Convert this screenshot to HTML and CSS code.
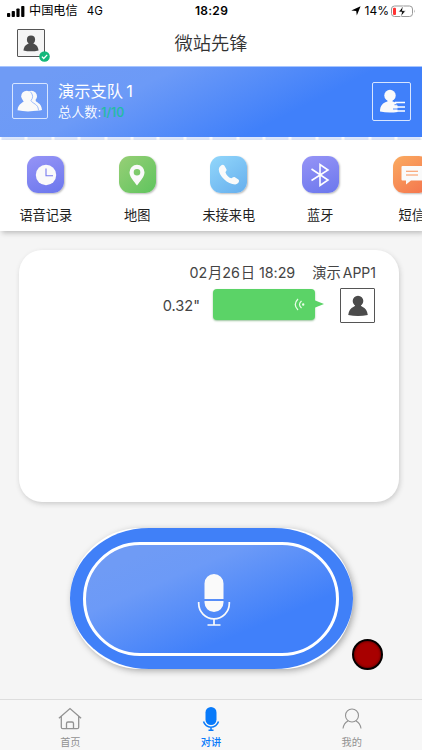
FILE: index.html
```html
<!DOCTYPE html>
<html lang="zh-CN">
<head>
<meta charset="utf-8">
<title>微站先锋</title>
<link rel="stylesheet" href="styles.css">
</head>
<body>
<svg class="defs" width="0" height="0">
  <symbol id="person" viewBox="0 0 20 22"><circle cx="10" cy="6" r="5.300"/><path d="M7.200 10h5.600q0 1.200 1.500 1.700 4.700 1.800 5.500 8.300-9.800 2.200-19.600 0 .8-6.500 5.500-8.300 1.500-.5 1.500-1.700z"/></symbol>
</svg>
<header class="top">
  <div class="status">
    <div class="carrier">
      <svg class="signal" width="18" height="11" viewBox="0 0 18 11"><rect x="0" y="7" width="3.200" height="4" rx=".8"/><rect x="4.700" y="5" width="3.200" height="6" rx=".8"/><rect x="9.400" y="2.500" width="3.200" height="8.500" rx=".8"/><rect x="14.200" y="0" width="3.200" height="11" rx=".8"/></svg>
      <span class="name">中国电信</span><span class="net">4G</span>
    </div>
    <div class="clock">18:29</div>
    <div class="battery">
      <svg width="10" height="10" viewBox="0 0 10 10"><path d="M9.600.300 5.800 9.600 5.200 5 .300 4.400z"/></svg>
      <span class="percent">14%</span>
      <svg width="25" height="13" viewBox="0 0 25 13"><rect x=".500" y="1" width="21" height="10.500" rx="3" fill="#fff" stroke="#999"/><path d="M23.300 4.500v3.500q1.400-1.700 0-3.500z" fill="#999"/><rect x="2" y="2.700" width="3" height="7.200" rx="1" fill="#f33"/><path d="M12.300.800 7.600 7h3.200l-1.200 5 5-6.300h-3.300z" stroke="#fff" stroke-width=".7"/></svg>
    </div>
  </div>
  <div class="nav">
    <div class="avatar"><svg width="16" height="17"><use href="#person"/></svg>
      <svg class="check" width="11" height="11" viewBox="0 0 11 11"><circle cx="5.500" cy="5.500" r="5.300" fill="#14b87b"/><path d="m2.900 5.600 1.800 1.900 3.500-3.600" fill="none" stroke="#fff" stroke-width="1.300"/></svg>
    </div>
    <h1>微站先锋</h1>
  </div>
</header>
<section class="group">
  <div class="frame members"><svg width="26" height="22" viewBox="0 0 26 22"><circle cx="14.500" cy="6.300" r="5.500"/><path d="M14 10h4.500c0 3 6 2 6.500 10q-4 1-9 0z"/><path d="M7.300 9.500h6.200c0 4 7.500 3 8 10.800q-10.500 2.300-21 0C1 12.500 7.300 13.500 7.300 9.500z"/><circle cx="9.800" cy="6.300" r="5.600"/><path d="M13.500 1.800q4 4.500.5 8.700c1.500 3.500 7.200 3 7.500 9.700" fill="none" stroke="#79a3fa" stroke-width=".7"/></svg></div>
  <div class="info">
    <div class="title">演示支队<span>1</span></div>
    <div class="count">总人数:<b>1/10</b></div>
  </div>
  <div class="frame list"><svg width="26" height="24" viewBox="0 0 26 24"><circle cx="11" cy="6.500" r="5.700"/><path d="M8.500 10h5v2.500c3 .6 4 2 5 4V23q-9 1.300-17.500-.5c0-6 3-9 7.500-10z"/><path d="M16 13.500h10M18 18h8M16 22h10" stroke="#fff" stroke-width="1.700"/><path d="M15.500 15.700h6M14 20h6" stroke="#4080f8" stroke-width=".9"/></svg></div>
</section>
<div class="dashes"></div>
<nav class="tools">
  <a class="tool"><span class="tile violet"><svg width="22" height="22" viewBox="0 0 22 22"><circle cx="11" cy="11" r="10.200"/><path d="M11 4.500v7.300h7" fill="none" stroke="#777aef" stroke-width="1.100"/></svg></span>语音记录</a>
  <a class="tool"><span class="tile green"><svg width="16" height="22" viewBox="0 0 16 22"><path fill-rule="evenodd" d="M8 .800a7.500 7.500 0 0 0-7.500 7.500C.500 13 5 17.500 8 21.500c3-4 7.500-8.500 7.500-13.200A7.500 7.500 0 0 0 8 .800zm0 4.200a3.300 3.300 0 1 1 0 6.600A3.300 3.300 0 0 1 8 5z"/></svg></span>地图</a>
  <a class="tool"><span class="tile sky"><svg width="22" height="22" viewBox="0 0 22 22"><path d="M1.800 2.800Q4.300-.500 6.300 1.500l2 3.600c.9 1.700-.8 2.200-.8 3.300 1 2.700 3 5 5.700 5.900 1.300-.1 2-1.900 3.700-1l3.500 2.300c1.800 1.600-.6 4.400-3.200 4.900C9.500 20.500.500 11.500.800 5.200c.1-1 .5-1.700 1-2.400z"/></svg></span>未接来电</a>
  <a class="tool"><span class="tile violet"><svg width="20" height="24" viewBox="0 0 20 24"><path d="m1.500 6 16.500 11-8 5.500v-21L18 7 1.500 17.500" fill="none" stroke="#fff" stroke-width="1.600"/></svg></span>蓝牙</a>
  <a class="tool"><span class="tile orange"><svg width="22" height="20" viewBox="0 0 22 20"><path d="M1.500 1h19q1 0 1 1v12.500q0 1-1 1H10l-5 4v-4H1.500q-1 0-1-1V2q0-1 1-1z"/><path d="M5 6.300h12M5 10h12" stroke="#f99157" stroke-width="1.100"/></svg></span>短信</a>
</nav>
<main>
  <section class="messages">
    <div class="meta"><time>02<i>月</i>26<i>日</i> 18:29</time><span>演示<b>APP1</b></span></div>
    <div class="message">
      <span class="length">0.32"</span>
      <div class="bubble"><svg width="11" height="13" viewBox="0 0 11 13" fill="none" stroke="#eaffe9" stroke-width="1.200"><path d="M4 1q-5.500 5.500 0 11M7.500 3q-4 3.500 0 7"/><circle cx="9.200" cy="6.500" r=".6"/></svg></div>
      <div class="sender"><svg width="20" height="22"><use href="#person"/></svg></div>
    </div>
  </section>
  <div class="talk">
    <div class="ring"><div class="pad">
      <svg width="34" height="54" viewBox="0 0 34 54"><path d="M7.500 10.500a9.500 9.500 0 0 1 19 0V26h-19zM7.500 28h19v1.500a9.500 9.500 0 0 1-19 0z"/><path d="M1.700 29v1.500a15.300 15.300 0 0 0 30.600 0V29M17 45.500V52M10.500 52h13" fill="none" stroke="#fafafa" stroke-width="1.700"/></svg>
    </div></div>
    <span class="record"></span>
  </div>
</main>
<footer class="tabs">
  <a><svg width="24" height="24" viewBox="0 0 24 24" fill="none" stroke="#929292" stroke-width="1.300"><path d="M.900 11.200 12 1.500l11.100 9.700M3.300 9.500v10.700q0 1.500 1.500 1.500h14.400q1.500 0 1.500-1.500V9.500M8.500 21.500v-5q0-1.500 1.500-1.500h4q1.500 0 1.500 1.500v5"/></svg>首页</a>
  <a class="active"><svg width="18" height="26" viewBox="0 0 18 26"><rect x="3.500" y="1" width="11" height="18" rx="5.500"/><path d="M1.500 15.500C4 23 14 23 16.500 15.500M9 21v3M6.500 24.300h5" fill="none" stroke="#087afa" stroke-width="1.500"/></svg>对讲</a>
  <a><svg width="20" height="24" viewBox="0 0 20 24" fill="none" stroke="#929292" stroke-width="1.100"><circle cx="10" cy="8.500" r="6.500"/><path d="M1 21.500q.800-5.500 5-7.500M19 21.500q-.800-5.500-5-7.500"/></svg>我的</a>
</footer>
</body>
</html>
```
FILE: styles.css
```css
* { box-sizing: border-box; }
body {
  margin: 0;
  width: 422px;
  height: 750px;
  overflow: hidden;
  display: flex;
  flex-direction: column;
  background: #f5f5f5;
  color: #333;
  font-family: Inter, "Noto Sans CJK SC", sans-serif;
}
svg { display: block; flex: none; }
i { font-style: normal; }
.defs { position: absolute; }
.top { height: 66px; background: #fff; flex: none; }
.status {
  height: 22px;
  padding: 0 6px 0 7px;
  display: grid;
  grid-template-columns: 1fr auto 1fr;
  align-items: center;
  color: #000;
  font-size: 11.5px;
  line-height: 22px;
}
.carrier, .battery { display: flex; align-items: center; }
.name { margin-left: 4px; font-size: 12.2px; }
.net { margin-left: 9px; }
.clock { font-weight: 600; font-size: 12px; letter-spacing: .3px; }
.battery { justify-content: flex-end; }
.percent { margin: 0 2px 0 4px; font-size: 12px; }
.nav { height: 44px; display: grid; grid-template-columns: 1fr auto 1fr; }
.avatar {
  position: relative;
  width: 28px;
  height: 28px;
  margin: 7px 0 0 17px;
  display: grid;
  place-items: center;
  border: 1px solid #555;
  border-radius: 1px;
  background: #f5f5f5;
  fill: #4b4b4b;
}
.check { position: absolute; right: -6px; bottom: -6px; }
h1 { margin: 0; font-size: 18.3px; line-height: 42px; font-weight: 350; color: #333; }
.group {
  height: 71px;
  flex: none;
  display: flex;
  align-items: center;
  padding: 0 11px 2px 12px;
  border-top: 1px solid #a7c5ff;
  background: linear-gradient(153deg, #6f9bf5 10%, #6c9af7 32%, #4080fa 68%);
  color: #fff;
}
.frame { display: grid; place-items: center; border: 1.5px solid #d7e5ff; border-radius: 2px; fill: #fafafa; }
.members { width: 36px; height: 36px; }
.list { width: 39px; height: 39px; margin-left: auto; }
.info { margin-left: 10px; }
.title { font-size: 16.3px; line-height: 22px; font-weight: 400; }
.title span { margin-left: 3px; }
.count { font-size: 13.2px; line-height: 20px; font-weight: 350; }
.count b { font-weight: 500; color: #21bda0; font-size: 12.5px; }
.dashes {
  height: 3px;
  flex: none;
  background: repeating-linear-gradient(90deg, #dce8ff 0 23.400px, #fff 23.400px 26.400px) 1.500px 0;
}
.tools {
  height: 91px;
  flex: none;
  display: flex;
  overflow: hidden;
  padding: 16px 0 0;
  background: #fff;
  box-shadow: 2px 2px 5px #bbb;
}
.tool {
  flex: 0 0 91.5px;
  display: flex;
  flex-direction: column;
  align-items: center;
  gap: 11px;
  font-size: 13.2px;
  line-height: 22px;
  color: #222;
}
.tile {
  width: 37px;
  height: 37px;
  display: grid;
  place-items: center;
  border-radius: 11px;
  box-shadow: 1px 1px 2px #bbb;
  fill: #fafafa;
}
.violet { background: linear-gradient(160deg, #9694f6, #6b77ed); }
.green { background: linear-gradient(135deg, #97cf76, #5fc45e); }
.sky { background: linear-gradient(145deg, #92d7fb, #66aeed); }
.orange { background: linear-gradient(145deg, #faab60, #f4724d); }
main { flex: 1; padding-top: 19px; }
.messages {
  width: 380px;
  height: 252px;
  margin-left: 19px;
  padding: 12px 23px 0 0;
  border-radius: 23px;
  background: #fff;
  box-shadow: 1px 2px 5px #ccc;
  color: #444;
}
.meta { display: flex; justify-content: flex-end; gap: 17px; font-size: 14.3px; line-height: 22px; }
.meta i { margin-left: 1px; }
.meta b { margin-left: 2px; font-weight: 400; font-size: 14px; }
.meta time { letter-spacing: -.05px; }
.message { margin: 4px 1px 0 0; display: flex; justify-content: flex-end; align-items: center; }
.length { font-size: 14.6px; margin-right: 13px; }
.bubble {
  position: relative;
  width: 102px;
  height: 31px;
  margin: -3px 25px 0 0;
  display: flex;
  justify-content: flex-end;
  align-items: center;
  padding-right: 10px;
  border-radius: 4px;
  background: #5bd367;
  box-shadow: 0 1px 2px #9bc49e;
}
.bubble::after {
  content: "";
  position: absolute;
  left: 101px;
  top: 11px;
  border: solid transparent;
  border-width: 4px 0 4px 10px;
  border-left-color: #5bd367;
}
.sender { width: 35px; height: 35px; display: grid; place-items: center; border: 1px solid #555; border-radius: 1px; fill: #4b4b4b; }
.talk {
  position: relative;
  width: 283px;
  height: 141px;
  margin: 26px 0 0 70px;
  border-radius: 71px;
  background: #fff;
  box-shadow: 2px 2px 6px #aaa;
}
.ring { height: 141px; padding: 14px 14px 13px 13px; border-radius: 79px / 70.5px; background: #4080f8; }
.pad {
  height: 114px;
  display: grid;
  place-items: center;
  padding: 2px 0 0 5px;
  border: 3.5px solid #fff;
  border-radius: 57px;
  background: linear-gradient(157deg, #6f9bf5 15%, #6c9af7 32%, #4080fa 72%);
  fill: #fafafa;
}
.record {
  position: absolute;
  left: 282px;
  top: 111px;
  width: 31px;
  height: 31px;
  border: 2.5px solid #050000;
  border-radius: 50%;
  background: #a80000;
  box-shadow: inset 0 0 2px 1px #700;
}
.tabs { height: 51px; flex: none; display: flex; border-top: 1px solid #ddd; background: #f7f7f7; }
.tabs a {
  flex: 1;
  display: flex;
  flex-direction: column;
  align-items: center;
  font-size: 10.2px;
  line-height: 14px;
  color: #929292;
}
.tabs svg { height: 26px; margin: 6px 0 3px; }
.tabs .active { color: #087afa; fill: #087afa; font-weight: 500; }
```
